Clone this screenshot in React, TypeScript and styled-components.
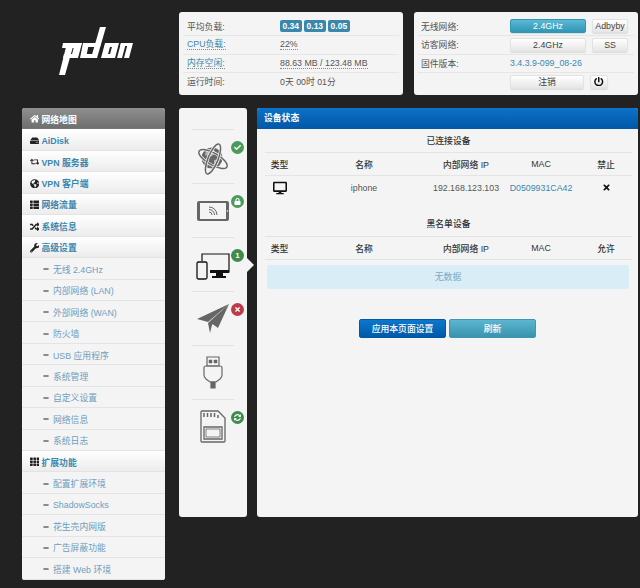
import React from "react";
import styled, { createGlobalStyle } from "styled-components";
import {
  FaCheck,
  FaDesktop,
  FaGlobeAmericas,
  FaHdd,
  FaHome,
  FaLock,
  FaMinus,
  FaPowerOff,
  FaRandom,
  FaRetweet,
  FaSyncAlt,
  FaTh,
  FaThList,
  FaTimes,
  FaWrench,
} from "react-icons/fa";

const GlobalStyle = createGlobalStyle`
  html, body {
    margin: 0;
    padding: 0;
    background: #222222;
  }
  body {
    font-family: "Liberation Sans", "Noto Sans CJK SC", sans-serif;
    font-size: 8.8px;
    color: #555;
  }
`;

const Page = styled.div`
  width: 640px;
  height: 588px;
  overflow: hidden;
  display: flex;
  background: #222222;
`;

const LeftColumn = styled.div`
  width: 143px;
  margin-left: 22px;
`;

const LogoBox = styled.div`
  height: 108px;
  padding: 26px 0 0 36px;
  box-sizing: border-box;
`;

const Sidebar = styled.nav`
  background: #f4f4f4;
  border-radius: 3px;
  overflow: hidden;
`;

const NavRow = styled.div<{ $active?: boolean; $sub?: boolean }>`
  height: 21.45px;
  box-sizing: border-box;
  display: flex;
  align-items: center;
  gap: ${(p) => (p.$sub ? "2px" : "2.5px")};
  padding: 2px 0 0 ${(p) => (p.$sub ? "21px" : "7.5px")};
  border-bottom: 1px solid ${(p) => (p.$active ? "#777" : "#e4e4e4")};
  background: ${(p) =>
    p.$active
      ? "linear-gradient(#8f8f8f, #6f6f6f)"
      : p.$sub
        ? "#f4f4f4"
        : "linear-gradient(#ffffff, #ececec)"};
  color: ${(p) => (p.$active ? "#fff" : p.$sub ? "#6f9dbd" : "#3a87ad")};
  font-weight: ${(p) => (p.$sub ? "normal" : "bold")};
  svg {
    flex: none;
    width: ${(p) => (p.$sub ? "6px" : "9.5px")};
    height: ${(p) => (p.$sub ? "6px" : "9.5px")};
    color: ${(p) => (p.$active ? "#fff" : "#222")};
    margin-right: ${(p) => (p.$sub ? "2px" : "0")};
  }
`;

const RightColumn = styled.div`
  width: 459px;
  margin-left: 14px;
  padding-top: 12px;
`;

const TopRow = styled.div`
  display: flex;
  gap: 11px;
  height: 83px;
  margin-bottom: 13px;
`;

const InfoPanel = styled.section`
  width: 224px;
  box-sizing: border-box;
  background: #f4f4f4;
  border-radius: 3px;
  padding: 5px 4px 4px;
`;

const InfoRow = styled.div`
  height: 18.3px;
  display: grid;
  grid-template-columns: 93px 1fr;
  align-items: center;
  padding-left: 4px;
  border-top: 1px solid #e6e6e6;
  box-sizing: border-box;
  &:first-child {
    border-top: none;
  }
`;

const Label = styled.span`
  color: #555;
`;

const LinkLabel = styled.span`
  justify-self: start;
  color: #3a87ad;
  border-bottom: 1px dotted #888;
  line-height: 10px;
`;

const HintValue = styled.span`
  justify-self: start;
  border-bottom: 1px dotted #888;
  line-height: 10px;
`;

const Badges = styled.div`
  display: flex;
  gap: 2.5px;
`;

const Badge = styled.span`
  background: #3a87ad;
  color: #fff;
  font-weight: bold;
  font-size: 8.5px;
  line-height: 12px;
  padding: 0 2.5px;
  border-radius: 2px;
`;

const ActionRow = styled.div`
  height: 18.3px;
  display: flex;
  align-items: center;
  padding-left: 3px;
  border-top: 1px solid #e6e6e6;
  box-sizing: border-box;
  &:first-child {
    border-top: none;
  }
`;

const ActionLabel = styled.span`
  width: 89px;
  flex: none;
`;

const SoftButton = styled.button<{ $width: number; $info?: boolean }>`
  width: ${(p) => p.$width}px;
  height: 14px;
  margin-right: 6px;
  padding: 0;
  display: flex;
  align-items: center;
  justify-content: center;
  font: inherit;
  color: ${(p) => (p.$info ? "#fff" : "#444")};
  background: ${(p) =>
    p.$info
      ? "linear-gradient(#5bb9d6, #2f96b4)"
      : "linear-gradient(#ffffff, #e6e6e6)"};
  border: 1px solid ${(p) => (p.$info ? "#2f96b4" : "#e2e2e2")};
  border-radius: 2px;
  box-shadow: 0 1px 1px rgba(0, 0, 0, 0.1);
  svg {
    width: 9.5px;
    height: 9.5px;
    color: #111;
  }
`;

const FirmwareLink = styled.span`
  color: #3a87ad;
`;

const BottomRow = styled.div`
  display: flex;
  gap: 10px;
  height: 409px;
`;

const DeviceRail = styled.aside`
  position: relative;
  width: 68px;
  box-sizing: border-box;
  background: #f4f4f4;
  border-radius: 3px;
  padding-top: 21px;
`;

const RailItem = styled.div`
  position: relative;
  height: 54px;
  margin: 0 13px;
  box-sizing: border-box;
  border-top: 1px solid #e2e2e2;
  display: flex;
  align-items: center;
  justify-content: center;
`;

const RailArrow = styled.div`
  position: absolute;
  top: 150px;
  right: -7px;
  width: 0;
  height: 0;
  border-top: 7px solid transparent;
  border-bottom: 7px solid transparent;
  border-left: 7px solid #f4f4f4;
`;

const StatusDot = styled.span<{ $color: string }>`
  position: absolute;
  top: 11px;
  right: -10px;
  width: 13px;
  height: 13px;
  border-radius: 50%;
  background: ${(p) => p.$color};
  color: #fff;
  font-size: 8px;
  font-weight: bold;
  display: flex;
  align-items: center;
  justify-content: center;
  svg {
    width: 7px;
    height: 7px;
  }
`;

const MainPanel = styled.main`
  width: 381px;
  background: #f4f4f4;
  border-radius: 3px;
  overflow: hidden;
`;

const PanelHeader = styled.header`
  height: 21px;
  line-height: 21px;
  padding-left: 7px;
  color: #fff;
  font-weight: bold;
  background: linear-gradient(#0c72c9, #0057a6);
`;

const PanelBody = styled.div`
  padding: 0 6px 0 8px;
`;

const TableTitle = styled.div<{ $spaced?: boolean }>`
  box-sizing: border-box;
  height: ${(p) => (p.$spaced ? "25px" : "24px")};
  line-height: 24px;
  margin-top: ${(p) => (p.$spaced ? "13px" : "0")};
  text-align: center;
  font-weight: 500;
  color: #333;
  border-bottom: 1px solid #e4e4e4;
`;

const TableRow = styled.div<{ $head?: boolean; $height: number }>`
  display: grid;
  grid-template-columns: 29px 140px 64px 86px 44px;
  height: ${(p) => p.$height}px;
  align-items: center;
  justify-items: center;
  box-sizing: border-box;
  font-weight: ${(p) => (p.$head ? 500 : 400)};
  color: ${(p) => (p.$head ? "#333" : "#555")};
  border-bottom: ${(p) => (p.$head ? "1px solid #e4e4e4" : "none")};
  white-space: nowrap;
  svg {
    color: #111;
  }
`;

const MacLink = styled.span`
  color: #3a87ad;
`;

const EmptyNotice = styled.div`
  margin: 5px 3px 0 2px;
  height: 24px;
  line-height: 24px;
  text-align: center;
  color: #7da9bf;
  background: #d9edf7;
  border-radius: 2px;
`;

const ButtonBar = styled.div`
  display: flex;
  justify-content: center;
  gap: 3px;
  margin-top: 30px;
  padding-right: 2px;
`;

const MainButton = styled.button<{ $tone: "primary" | "info" }>`
  width: 87px;
  height: 19px;
  padding: 0;
  font: inherit;
  font-weight: 500;
  color: #fff;
  border-radius: 2px;
  border: 1px solid ${(p) => (p.$tone === "primary" ? "#0057a6" : "#3f97b2")};
  background: ${(p) =>
    p.$tone === "primary"
      ? "linear-gradient(#0b78cc, #0059a8)"
      : "linear-gradient(#5cb6d0, #3a93ae)"};
`;

const navItems = [
  { label: "网络地图", icon: <FaHome />, active: true },
  { label: "AiDisk", icon: <FaHdd /> },
  { label: "VPN 服务器", icon: <FaRetweet /> },
  { label: "VPN 客户端", icon: <FaGlobeAmericas /> },
  { label: "网络流量", icon: <FaThList /> },
  { label: "系统信息", icon: <FaRandom /> },
  { label: "高级设置", icon: <FaWrench /> },
  { label: "无线 2.4GHz", sub: true },
  { label: "内部网络 (LAN)", sub: true },
  { label: "外部网络 (WAN)", sub: true },
  { label: "防火墙", sub: true },
  { label: "USB 应用程序", sub: true },
  { label: "系统管理", sub: true },
  { label: "自定义设置", sub: true },
  { label: "网络信息", sub: true },
  { label: "系统日志", sub: true },
  { label: "扩展功能", icon: <FaTh /> },
  { label: "配置扩展环境", sub: true },
  { label: "ShadowSocks", sub: true },
  { label: "花生壳内网版", sub: true },
  { label: "广告屏蔽功能", sub: true },
  { label: "搭建 Web 环境", sub: true },
];

// brand mark, slanted bars
const Logo = () => (
  <svg width="78" height="50" viewBox="0 0 78 50" fill="#fff">
    <polygon points="1,49 7,49 16,17 9,17" />
    <polygon points="5,17 24,17 22,22 4,22" />
    <polygon points="17,17 24,17 20,32 13,32" />
    <polygon points="6,28 20,28 19,32 5,32" />
    <polygon points="25,17 31,17 28,32 22,32" />
    <polygon points="42,1 48,1 39,32 33,32" />
    <polygon points="26,17 43,17 42,21 25,21" />
    <polygon points="24,28 38,28 37,32 23,32" />
    <polygon points="47,17 53,17 49,32 43,32" />
    <polygon points="55,17 61,17 57,32 51,32" />
    <polygon points="48,17 60,17 59,21 47,21" />
    <polygon points="45,28 56,28 55,32 44,32" />
    <polygon points="63,17 68,17 64,32 59,32" />
    <polygon points="70,17 75,17 71,32 66,32" />
    <polygon points="63,17 74,17 73,20 62,20" />
  </svg>
);

const GlobeIcon = () => (
  <svg width="34" height="38" viewBox="0 -4 34 38" fill="none">
    <circle cx="16" cy="16" r="10.5" fill="#666" />
    <path d="M10 9 L17 7 L20 11 L14 15 L9 13 Z M18 18 L24 17 L22 23 L18 22 Z" fill="#b5b5b5" />
    <ellipse cx="17" cy="17" rx="16" ry="6" transform="rotate(30 17 17)" stroke="#f4f4f4" strokeWidth="3" />
    <ellipse cx="17" cy="17" rx="16" ry="6" transform="rotate(30 17 17)" stroke="#666" strokeWidth="1.5" />
    <ellipse cx="17" cy="17" rx="16" ry="5" transform="rotate(-68 17 17)" stroke="#f4f4f4" strokeWidth="3" />
    <ellipse cx="17" cy="17" rx="16" ry="5" transform="rotate(-68 17 17)" stroke="#666" strokeWidth="1.5" />
  </svg>
);

const TabletIcon = () => (
  <svg width="34" height="22" viewBox="0 0 34 22">
    <rect x="1" y="1" width="32" height="20" rx="2" fill="#666" />
    <rect x="4" y="3" width="26" height="16" fill="#f4f4f4" />
    <g fill="none" stroke="#666" strokeWidth="1">
      <path d="M13 7 A8 8 0 0 1 21 15" />
      <path d="M13 9.5 A5.5 5.5 0 0 1 18.5 15" />
      <path d="M13 12 A3 3 0 0 1 16 15" />
    </g>
    <circle cx="31.5" cy="11" r="0.8" fill="#f4f4f4" />
  </svg>
);

const DevicesIcon = () => (
  <svg width="34" height="30" viewBox="0 -3 34 30" fill="none" stroke="#111">
    <path d="M6 8 V1 H33 V19 H14" strokeWidth="1.2" />
    <path d="M14 17 H33 V20 H14 Z" fill="#111" stroke="none" />
    <path d="M20 20 H27 V23 H30 V25 H16 V23 H20 Z" fill="#111" stroke="none" />
    <rect x="1" y="9" width="10" height="17" rx="1.5" strokeWidth="1.3" fill="#f4f4f4" />
  </svg>
);

const PlaneIcon = () => (
  <svg width="34" height="32" viewBox="0 0 34 32" fill="#666">
    <polygon points="33,1 1,16 12,19" />
    <polygon points="33,1 15,20 22,25" />
    <polygon points="33,1 12,20 14,30 16,22" />
  </svg>
);

const UsbIcon = () => (
  <svg width="20" height="34" viewBox="0 0 20 34" fill="none" stroke="#666" strokeWidth="1.2">
    <path d="M4 1 H16 V10 H4 Z" />
    <path d="M6 4 H9 V7 H6 Z M11 4 H14 V7 H11 Z" fill="#666" strokeWidth="0.5" />
    <path d="M3 10 H17 Q19 10 19 12 V19 Q19 21 17 23 L13 26 H7 L3 23 Q1 21 1 19 V12 Q1 10 3 10 Z" />
    <path d="M8 26 H12 V32 H8 Z" fill="#666" />
  </svg>
);

const SdCardIcon = () => (
  <svg width="26" height="33" viewBox="0 0 26 33" fill="none" stroke="#666" strokeWidth="1.3">
    <path d="M2 1 H18 L25 8 V31 Q25 32 24 32 H2 Q1 32 1 31 V2 Q1 1 2 1 Z" />
    <path d="M4 3 V7 M7.5 3 V7 M11 3 V7 M14.5 3 V7 M18 5 V8" strokeWidth="1.5" />
    <path d="M4 17 H22 V29 H4 Z" />
    <path d="M6 19 H20 V27 H6 Z" strokeWidth="0.8" />
  </svg>
);

const App = () => (
  <>
    <GlobalStyle />
    <Page>
      <LeftColumn>
        <LogoBox>
          <Logo />
        </LogoBox>
        <Sidebar>
          {navItems.map((item) => (
            <NavRow key={item.label} $active={item.active} $sub={item.sub}>
              {item.sub ? <FaMinus /> : item.icon}
              <span>{item.label}</span>
            </NavRow>
          ))}
        </Sidebar>
      </LeftColumn>
      <RightColumn>
        <TopRow>
          <InfoPanel>
            <InfoRow>
              <Label>平均负载:</Label>
              <Badges>
                <Badge>0.34</Badge>
                <Badge>0.13</Badge>
                <Badge>0.05</Badge>
              </Badges>
            </InfoRow>
            <InfoRow>
              <LinkLabel>CPU负载:</LinkLabel>
              <HintValue>22%</HintValue>
            </InfoRow>
            <InfoRow>
              <LinkLabel>内存空闲:</LinkLabel>
              <HintValue>88.63 MB / 123.48 MB</HintValue>
            </InfoRow>
            <InfoRow>
              <Label>运行时间:</Label>
              <span>0天 00时 01分</span>
            </InfoRow>
          </InfoPanel>
          <InfoPanel>
            <ActionRow>
              <ActionLabel>无线网络:</ActionLabel>
              <SoftButton $width={76} $info>2.4GHz</SoftButton>
              <SoftButton $width={36}>Adbyby</SoftButton>
            </ActionRow>
            <ActionRow>
              <ActionLabel>访客网络:</ActionLabel>
              <SoftButton $width={76}>2.4GHz</SoftButton>
              <SoftButton $width={36}>SS</SoftButton>
            </ActionRow>
            <ActionRow>
              <ActionLabel>固件版本:</ActionLabel>
              <FirmwareLink>3.4.3.9-099_08-26</FirmwareLink>
            </ActionRow>
            <ActionRow>
              <ActionLabel />
              <SoftButton $width={74}>注销</SoftButton>
              <SoftButton $width={18}>
                <FaPowerOff />
              </SoftButton>
            </ActionRow>
          </InfoPanel>
        </TopRow>
        <BottomRow>
          <DeviceRail>
            <RailItem>
              <GlobeIcon />
              <StatusDot $color="#4a9a5a"><FaCheck /></StatusDot>
            </RailItem>
            <RailItem>
              <TabletIcon />
              <StatusDot $color="#4a9a5a"><FaLock /></StatusDot>
            </RailItem>
            <RailItem>
              <DevicesIcon />
              <StatusDot $color="#3f8a4d">1</StatusDot>
            </RailItem>
            <RailItem>
              <PlaneIcon />
              <StatusDot $color="#bd3b47"><FaTimes /></StatusDot>
            </RailItem>
            <RailItem>
              <UsbIcon />
            </RailItem>
            <RailItem>
              <SdCardIcon />
              <StatusDot $color="#3f8a4d"><FaSyncAlt /></StatusDot>
            </RailItem>
            <RailArrow />
          </DeviceRail>
          <MainPanel>
            <PanelHeader>设备状态</PanelHeader>
            <PanelBody>
              <TableTitle>已连接设备</TableTitle>
              <TableRow $head $height={23}>
                <span>类型</span>
                <span>名称</span>
                <span>内部网络 IP</span>
                <span>MAC</span>
                <span>禁止</span>
              </TableRow>
              <TableRow $height={23}>
                <FaDesktop size={14} />
                <span>iphone</span>
                <span>192.168.123.103</span>
                <MacLink>D0509931CA42</MacLink>
                <FaTimes size={9} />
              </TableRow>
              <TableTitle $spaced>黑名单设备</TableTitle>
              <TableRow $head $height={23}>
                <span>类型</span>
                <span>名称</span>
                <span>内部网络 IP</span>
                <span>MAC</span>
                <span>允许</span>
              </TableRow>
              <EmptyNotice>无数据</EmptyNotice>
              <ButtonBar>
                <MainButton $tone="primary">应用本页面设置</MainButton>
                <MainButton $tone="info">刷新</MainButton>
              </ButtonBar>
            </PanelBody>
          </MainPanel>
        </BottomRow>
      </RightColumn>
    </Page>
  </>
);

export default App;
